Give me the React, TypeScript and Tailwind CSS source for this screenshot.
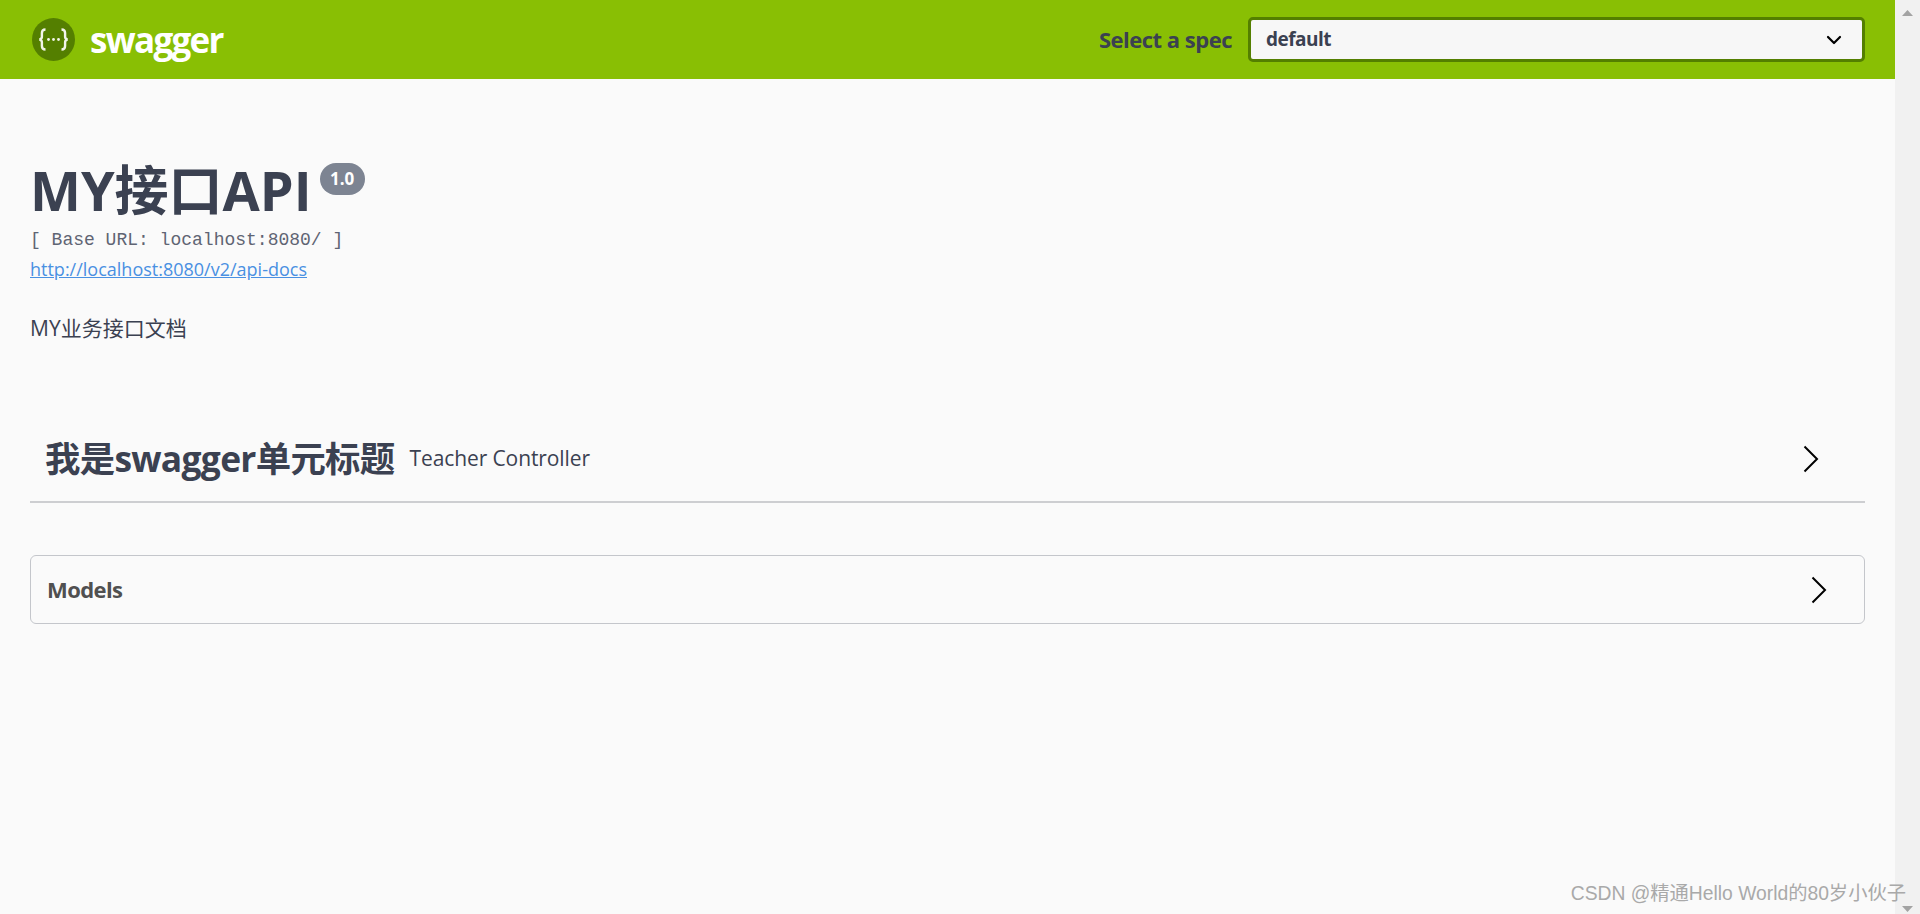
import React from 'react';
import { ChevronDown } from 'lucide-react';

const SANS = 'font-["Open_Sans","Noto_Sans_CJK_SC",sans-serif]';

const Chevron = () => (
  <svg width="16" height="28" viewBox="0 0 16 28" fill="none" aria-hidden="true">
    <path d="M1.5 1.5 14 14 1.5 26.500" stroke="#000" strokeWidth="2" />
  </svg>
);

const SwaggerLogo = () => (
  <svg width="43" height="43" viewBox="0 0 43 43" aria-hidden="true">
    <circle cx="21.5" cy="21.5" r="21.5" fill="#547f00" />
    <path
      d="M13.500 11.500c-3 0-3.600 1.400-3.600 3.600v3.600c0 1.600-.8 2.400-2.400 2.800 1.600.4 2.400 1.200 2.400 2.800v3.600c0 2.200.6 3.600 3.600 3.600"
      fill="none"
      stroke="#f2f5ea"
      strokeWidth="2.400"
    />
    <path
      d="M29.500 11.500c3 0 3.600 1.400 3.600 3.600v3.600c0 1.600.8 2.400 2.400 2.800-1.600.4-2.400 1.200-2.400 2.800v3.600c0 2.200-.6 3.600-3.600 3.600"
      fill="none"
      stroke="#f2f5ea"
      strokeWidth="2.400"
    />
    <circle cx="16.500" cy="21.500" r="1.400" fill="#f2f5ea" />
    <circle cx="21.500" cy="21.500" r="1.400" fill="#f2f5ea" />
    <circle cx="26.500" cy="21.500" r="1.400" fill="#f2f5ea" />
  </svg>
);

export default function App() {
  return (
    <div className={`relative flex h-screen w-full overflow-hidden bg-[#fafafa] ${SANS}`}>
      <div className="flex min-w-0 flex-1 flex-col">
        {/* Top bar */}
        <header className="flex h-[79px] shrink-0 items-center justify-between bg-[#89bf04] pl-[32px] pr-[30px]">
          <div className="flex items-center gap-[15px]">
            <SwaggerLogo />
            <span className="text-[35px] font-bold leading-none tracking-[-1.7px] text-white">swagger</span>
          </div>
          <div className="flex items-center gap-[16px]">
            <span className="text-[22px] font-bold tracking-[-0.5px] text-[#3b4151]">Select a spec</span>
            <div className="flex h-[45px] w-[617px] items-center justify-between rounded-[5px] border-[3px] border-[#547f00] bg-[#f7f7f7] pl-[15px] pr-[16px]">
              <span className="text-[19px] font-bold tracking-[-0.5px] text-[#3b4151]">default</span>
              <ChevronDown size={24} strokeWidth={2.2} className="text-black" aria-hidden="true" />
            </div>
          </div>
        </header>

        {/* Info */}
        <main className="flex flex-col px-[30px]">
          <div className="mt-[78px] flex items-start">
            <h1 className="text-[54px] font-bold leading-[66px] text-[#3b4151]">MY接口API</h1>
            <span className="ml-[8px] mt-[6px] flex h-[32px] w-[45px] items-center justify-center rounded-full bg-[#7d8492] text-[17px] font-bold text-white">
              1.0
            </span>
          </div>
          <div className='mt-[5px] font-["Liberation_Mono",monospace] text-[18px] leading-[24px] text-[#5f6473]'>
            [ Base URL: localhost:8080/ ]
          </div>
          <a href="#" className="mt-[5px] w-fit text-[18px] leading-[24px] text-[#4990e2] underline">
            http://localhost:8080/v2/api-docs
          </a>
          <p className="mt-[33px] text-[21px] leading-[28px] text-[#3b4151]">MY业务接口文档</p>

          {/* Tag section */}
          <div className="mt-[74px] flex h-[87px] items-center border-b-2 border-[#cdced1] pl-[15px] pr-[46px]">
            <h4 className="text-[35.4px] font-bold tracking-[-0.7px] text-[#3b4151]">我是swagger单元标题</h4>
            <span className="ml-[15px] text-[21px] tracking-[-0.1px] text-[#3b4151]">Teacher Controller</span>
            <span className="ml-auto flex">
              <Chevron />
            </span>
          </div>

          {/* Models */}
          <div className="mt-[52px] flex h-[69px] items-center rounded-[6px] border border-[#c4c6cb] pl-[16px] pr-[37px]">
            <h4 className="text-[22px] font-bold tracking-[-0.6px] text-[#505050]">Models</h4>
            <span className="ml-auto flex">
              <Chevron />
            </span>
          </div>
        </main>
      </div>

      {/* Scrollbar */}
      <div className="flex w-[25px] shrink-0 flex-col items-center justify-between bg-[#f1f1f1] pb-[2px] pt-[10px]">
        <svg width="11" height="6" viewBox="0 0 11 6" aria-hidden="true">
          <path d="M5.500 0 11 6H0z" fill="#a3a3a3" />
        </svg>
        <svg width="11" height="6" viewBox="0 0 11 6" aria-hidden="true">
          <path d="M0 0h11L5.500 6z" fill="#a3a3a3" />
        </svg>
      </div>

      {/* Watermark */}
      <div className='absolute bottom-[8px] right-[14px] font-["Liberation_Sans","Noto_Sans_CJK_SC",sans-serif] text-[19.3px] leading-[24px] text-[#a9a9a9]'>
        CSDN @精通Hello World的80岁小伙子
      </div>
    </div>
  );
}
